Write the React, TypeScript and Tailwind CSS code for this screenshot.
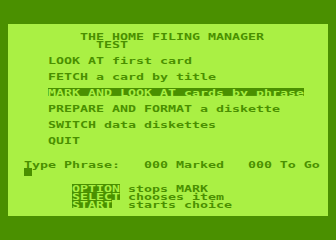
function Row({ col = 0, children }: { col?: number; children?: React.ReactNode }) {
  return (
    <div className="h-[8px] whitespace-pre" style={{ paddingLeft: col * 8 }}>
      <div className="h-[11.11px] origin-top scale-y-[0.72] leading-[11.11px]">
        {children && <span className="relative top-[0.7px]">{children}</span>}
      </div>
    </div>
  );
}

function Inv({ children }: { children: React.ReactNode }) {
  return (
    <span className="relative top-[-0.7px] inline-block h-[11.11px] bg-[#4a9000] align-top text-[#aaf044]">
      <span className="relative top-[0.7px]">{children}</span>
    </span>
  );
}

export default function App() {
  return (
    <div className="h-[240px] w-[336px] bg-[#4a9000] pl-[8px] pt-[24px]">
      <div
        className="flex h-[192px] w-[320px] flex-col bg-[#aaf044] text-[13.29px] font-bold text-[#4a9000]"
        style={{ fontFamily: '"DejaVu Sans Mono", monospace' }}
      >
        <Row />
        <Row col={9}>THE HOME FILING MANAGER</Row>
        <Row col={11}>TEST</Row>
        <Row />
        <Row col={5}>LOOK AT first card</Row>
        <Row />
        <Row col={5}>FETCH a card by title</Row>
        <Row />
        <Row col={5}>
          <Inv>MARK AND LOOK AT cards by phrase</Inv>
        </Row>
        <Row />
        <Row col={5}>PREPARE AND FORMAT a diskette</Row>
        <Row />
        <Row col={5}>SWITCH data diskettes</Row>
        <Row />
        <Row col={5}>QUIT</Row>
        <Row />
        <Row />
        <Row col={2}>Type Phrase:   000 Marked   000 To Go</Row>
        <div className="h-[8px] pl-[16px]">
          <div className="h-[8px] w-[8px] bg-[#4a9000]" />
        </div>
        <Row />
        <Row col={8}>
          <Inv>OPTION</Inv> stops MARK
        </Row>
        <Row col={8}>
          <Inv>SELECT</Inv> chooses item
        </Row>
        <Row col={8}>
          <Inv>START</Inv>  starts choice
        </Row>
        <Row />
      </div>
    </div>
  );
}
